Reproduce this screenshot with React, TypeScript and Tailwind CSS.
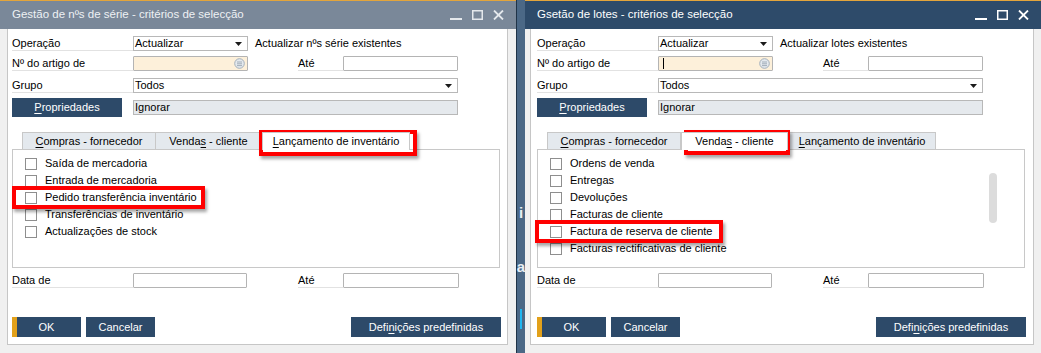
import React from 'react';

const font = "font-['Liberation_Sans',Arial,sans-serif]";

type Mn = [string, string, string];

function Caret() {
  return (
    <svg width="7" height="4" viewBox="0 0 7 4" aria-hidden="true">
      <path d="M0 0h7L3.5 4z" fill="#1b1b1b" />
    </svg>
  );
}

function Label({ text, w }: { text: string; w: string }) {
  return <div className={`h-[15px] border-b border-[#e2e2e2] leading-[14px] ${w}`}>{text}</div>;
}

function Select({ value, w }: { value: string; w: string }) {
  return (
    <div className={`flex h-[15px] items-center justify-between border border-[#b8b8b8] bg-white pl-[1px] pr-[5px] ${w}`}>
      <span className="leading-[13px]">{value}</span>
      <Caret />
    </div>
  );
}

function Input({ w, bg = 'bg-white', children }: { w: string; bg?: string; children?: React.ReactNode }) {
  return (
    <div className={`flex h-[15px] items-center justify-between rounded-[1px] border border-[#b4b4b4] ${bg} ${w}`}>
      {children}
    </div>
  );
}

function ListIcon() {
  return (
    <svg width="11" height="11" viewBox="0 0 11 11" className="mr-[2px]" aria-hidden="true">
      <circle cx="5.5" cy="5.5" r="4.8" fill="#e4e9ee" stroke="#a3afbb" strokeWidth="1" />
      <path d="M3 4h5M3 5.8h5M3 7.6h5" stroke="#9aa6b2" strokeWidth="0.9" />
    </svg>
  );
}

function Mnemonic({ parts }: { parts: Mn }) {
  return (
    <>
      {parts[0]}
      <span className="underline underline-offset-[2px]">{parts[1]}</span>
      {parts[2]}
    </>
  );
}

function Btn({ w, parts, ok }: { w: string; parts: Mn; ok?: boolean }) {
  return (
    <div
      className={`flex h-[20px] items-center justify-center bg-[#2d4a69] text-[11px] text-white ${w} ${
        ok ? 'shadow-[inset_5px_0_0_#e2a11b]' : ''
      }`}
    >
      <span>
        <Mnemonic parts={parts} />
      </span>
    </div>
  );
}

function Checkbox() {
  return <span className="h-[12px] w-[12px] shrink-0 border border-[#8e8e8e] bg-white" />;
}

const tabs: { parts: Mn; w: string }[] = [
  { parts: ['', 'C', 'ompras - fornecedor'], w: 'w-[134px]' },
  { parts: ['Venda', 's', ' - cliente'], w: 'w-[107px]' },
  { parts: ['', 'L', 'ançamento de inventário'], w: 'w-[148px]' },
];

function WinControls({ color }: { color: string }) {
  return (
    <div className={`flex items-center gap-[10px] pr-[12px] ${color}`}>
      <svg width="12" height="10" viewBox="0 0 12 10" aria-hidden="true">
        <rect x="0" y="8" width="12" height="2" fill="currentColor" />
      </svg>
      <svg width="11" height="10" viewBox="0 0 11 10" aria-hidden="true">
        <rect x="0.75" y="0.75" width="9.5" height="8.5" fill="none" stroke="currentColor" strokeWidth="1.5" />
      </svg>
      <svg width="11" height="10" viewBox="0 0 11 10" aria-hidden="true">
        <path d="M1 0.5l9 9M10 0.5l-9 9" stroke="currentColor" strokeWidth="1.8" />
      </svg>
    </div>
  );
}

type DialogProps = {
  title: string;
  active: boolean;
  opNote: string;
  selected: number;
  items: string[];
  scroll?: boolean;
  cursor?: boolean;
  frame: string;
  inner: string;
  boxes: string[];
};

function Dialog({ title, active, opNote, selected, items, scroll, cursor, frame, inner, boxes }: DialogProps) {
  return (
    <div className={`relative flex h-[353px] w-[516px] shrink-0 flex-col bg-[#f0f0f0] pb-[8px] text-[11px] text-black ${font}`}>
      <div
        className={`flex h-[29px] shrink-0 items-center justify-between border-t border-[#e3a53c] pl-[12px] text-[11.5px] ${
          active ? 'bg-[#2e4b6a] text-white' : 'bg-[#7a8899] text-[#eef1f4]'
        }`}
      >
        <span>{title}</span>
        <WinControls color={active ? 'text-white' : 'text-[#e4e8ec]'} />
      </div>
      <div className={`flex flex-1 ${frame}`}>
        <div className={`flex-1 border-x border-b border-[#c6c6c6] bg-white pt-[7px] ${inner}`}>
          <div className="flex w-[489px] flex-col">
            <div className="flex items-center">
              <Label text="Operação" w="w-[121px]" />
              <Select value="Actualizar" w="w-[115px]" />
              <span className="ml-[7px] leading-[15px]">{opNote}</span>
            </div>
            <div className="mt-[5px] flex items-center">
              <Label text="Nº do artigo de" w="w-[121px]" />
              <Input w="w-[115px]" bg="bg-[#fdf0da]">
                <span className={`ml-[4px] h-[11px] w-[1px] ${cursor ? 'bg-black' : ''}`} />
                <ListIcon />
              </Input>
              <div className="w-[50px]" />
              <Label text="Até" w="w-[45px]" />
              <Input w="w-[115px]" />
            </div>
            <div className="mt-[7px] flex items-center">
              <Label text="Grupo" w="w-[121px]" />
              <Select value="Todos" w="w-[325px]" />
            </div>
            <div className="mt-[5px] flex h-[19px] items-center">
              <div className="flex h-[19px] w-[110px] items-center justify-center bg-[#2d4a69] text-white">
                <span>
                  <Mnemonic parts={['', 'P', 'ropriedades']} />
                </span>
              </div>
              <div className="ml-[11px] flex h-[15px] w-[325px] items-center border border-[#b8b8b8] bg-[#e5e9ed] pl-[1px] leading-[13px]">
                Ignorar
              </div>
            </div>

            <div className="mt-[15px] flex h-[17px] items-end pl-[10px]">
              {tabs.map((t, i) =>
                i === selected ? (
                  <div
                    key={i}
                    className={`relative z-10 -mb-px flex h-[18px] items-center justify-center border-x border-t border-[#c8c8c8] bg-white ${t.w}`}
                  >
                    <span>
                      <Mnemonic parts={t.parts} />
                    </span>
                  </div>
                ) : (
                  <div
                    key={i}
                    className={`flex h-[17px] items-center justify-center border-x border-t border-[#c8c8c8] bg-[#e4e9ee] ${t.w} ${
                      i > 0 && i - 1 !== selected ? '-ml-px' : ''
                    }`}
                  >
                    <span>
                      <Mnemonic parts={t.parts} />
                    </span>
                  </div>
                )
              )}
            </div>
            <div className="flex h-[119px] w-[488px] border border-[#c8c8c8]">
              <div className="flex-1 pl-[12px] pt-[5px]">
                {items.map((it) => (
                  <div key={it} className="flex h-[17px] items-center gap-[8px]">
                    <Checkbox />
                    <span>{it}</span>
                  </div>
                ))}
              </div>
              {scroll && <div className="mr-[27px] mt-[23px] h-[50px] w-[8px] rounded-[4px] bg-[#dcdcdc]" />}
            </div>

            <div className="mt-[5px] flex items-center">
              <Label text="Data de" w="w-[121px]" />
              <Input w="w-[114px]" />
              <div className="w-[51px]" />
              <Label text="Até" w="w-[45px]" />
              <Input w="w-[116px]" />
            </div>

            <div className="mt-[29px] flex items-center">
              <Btn w="w-[69px]" parts={['', '', 'OK']} ok />
              <div className="ml-[5px]">
                <Btn w="w-[69px]" parts={['', '', 'Cancelar']} />
              </div>
              <div className="ml-auto">
                <Btn w="w-[150px]" parts={['Defi', 'n', 'ições predefinidas']} />
              </div>
            </div>
          </div>
        </div>
      </div>
      {boxes.map((b) => (
        <div key={b} className={`pointer-events-none absolute border-[4px] border-[#ff0000] shadow-[2px_3px_3px_rgba(0,0,0,0.35)] ${b}`} />
      ))}
    </div>
  );
}

export default function App() {
  return (
    <div className="flex h-[353px] w-[1041px] overflow-hidden bg-[#4b6886]">
      <Dialog
        title="Gestão de nºs de série - critérios de selecção"
        active={false}
        opNote="Actualizar nºs série existentes"
        selected={2}
        items={[
          'Saída de mercadoria',
          'Entrada de mercadoria',
          'Pedido transferência inventário',
          'Transferências de inventário',
          'Actualizações de stock',
        ]}
        frame="pl-[7px] pr-[8px]"
        inner="pl-[4px]"
        boxes={['left-[259px] top-[130px] w-[158px] h-[26px]', 'left-[12px] top-[186px] w-[193px] h-[23px]']}
      />
      <div className={`flex w-[9px] shrink-0 flex-col items-center border-l border-[#1f3347] bg-[#4b6886] pt-[205px] text-[15px] font-bold leading-[16px] text-[#e8eef4] ${font}`}>
        <span>i</span>
        <span className="mt-[38px]">a</span>
        <span className="mt-[34px] h-[20px] w-[2px] bg-[#1fb6f0]" />
      </div>
      <Dialog
        title="Gsetão de lotes - critérios de selecção"
        active
        opNote="Actualizar lotes existentes"
        selected={1}
        items={[
          'Ordens de venda',
          'Entregas',
          'Devoluções',
          'Facturas de cliente',
          'Factura de reserva de cliente',
          'Facturas rectificativas de cliente',
        ]}
        scroll
        cursor
        frame="pl-[5px] pr-[7px]"
        inner="pl-[6px]"
        boxes={['left-[159px] top-[130px] w-[106px] h-[25px]', 'left-[10px] top-[220px] w-[188px] h-[23px]']}
      />
    </div>
  );
}
